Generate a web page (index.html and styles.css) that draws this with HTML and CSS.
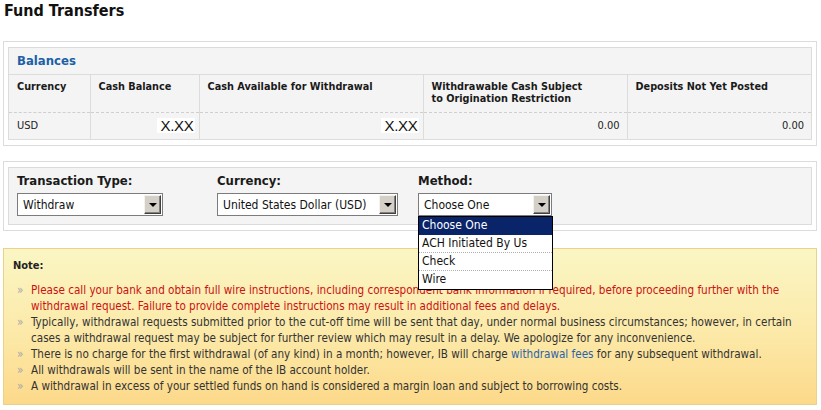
FILE: index.html
```html
<!DOCTYPE html>
<html>
<head>
<meta charset="utf-8">
<link rel="stylesheet" href="styles.css">
</head>
<body>
<div class="page">
  <h1 class="title">Fund Transfers</h1>

  <section class="panel">
    <div class="panel-inner">
      <table class="balances">
        <colgroup>
          <col class="c1"><col class="c2"><col class="c3"><col class="c4"><col class="c5">
        </colgroup>
        <thead>
          <tr class="caption-row"><th colspan="5" class="caption">Balances</th></tr>
          <tr class="head-row">
            <th>Currency</th>
            <th>Cash Balance</th>
            <th>Cash Available for Withdrawal</th>
            <th>Withdrawable Cash Subject<br>to Origination Restriction</th>
            <th>Deposits Not Yet Posted</th>
          </tr>
        </thead>
        <tbody>
          <tr class="data-row">
            <td>USD</td>
            <td class="num"><span class="mask">X.XX</span></td>
            <td class="num"><span class="mask">X.XX</span></td>
            <td class="num">0.00</td>
            <td class="num">0.00</td>
          </tr>
        </tbody>
      </table>
    </div>
  </section>

  <section class="panel form-panel">
    <div class="panel-inner form-grid">
      <div class="field">
        <div class="label">Transaction Type:</div>
        <div class="select w-type"><span class="select-text">Withdraw</span><span class="arrow"></span></div>
      </div>
      <div class="field">
        <div class="label">Currency:</div>
        <div class="select w-cur"><span class="select-text">United States Dollar (USD)</span><span class="arrow"></span></div>
      </div>
      <div class="field">
        <div class="label">Method:</div>
        <div class="select w-method"><span class="select-text">Choose One</span><span class="arrow"></span></div>
        <ul class="dropdown">
          <li class="selected">Choose One</li>
          <li>ACH Initiated By Us</li>
          <li>Check</li>
          <li>Wire</li>
        </ul>
      </div>
    </div>
  </section>

  <section class="note">
    <div class="note-title">Note:</div>
    <ul class="note-list">
      <li class="warn">Please call your bank and obtain full wire instructions, including correspondent bank information if required, before proceeding further with the withdrawal request. Failure to provide complete instructions may result in additional fees and delays.</li>
      <li>Typically, withdrawal requests submitted prior to the cut-off time will be sent that day, under normal business circumstances; however, in certain cases a withdrawal request may be subject for further review which may result in a delay. We apologize for any inconvenience.</li>
      <li>There is no charge for the first withdrawal (of any kind) in a month; however, IB will charge <a class="link" href="#">withdrawal fees</a> for any subsequent withdrawal.</li>
      <li>All withdrawals will be sent in the name of the IB account holder.</li>
      <li>A withdrawal in excess of your settled funds on hand is considered a margin loan and subject to borrowing costs.</li>
    </ul>
  </section>
</div>
</body>
</html>
```

FILE: styles.css
```css
* { box-sizing: border-box; }
html, body { margin: 0; padding: 0; background: #fff; }
body {
  font-family: "DejaVu Sans Condensed", "DejaVu Sans", sans-serif;
  font-size: 11px;
  color: #333;
}
.page { padding: 0 4px 0 3px; }

.title {
  margin: 0;
  padding-left: 1px;
  font-size: 16px;
  line-height: 22px;
  font-weight: bold;
  color: #111;
}

.panel {
  border: 1px solid #dcdcdc;
  padding: 5px 4px;
  margin-top: 19px;
  background: #fff;
}
.panel-inner {
  border: 1px solid #dcdcdc;
  background: #f4f4f4;
}

.balances {
  width: 100%;
  border-collapse: collapse;
  table-layout: fixed;
}
.c1 { width: 81px; }
.c2 { width: 109px; }
.c3 { width: 224px; }
.c4 { width: 204px; }
.c5 { width: auto; }

.caption {
  height: 26px;
  text-align: left;
  padding: 0 0 0 8px;
  font-size: 13px;
  font-weight: bold;
  color: #1d5fa6;
  border-bottom: 1px solid #dcdcdc;
}
.head-row th {
  height: 38px;
  vertical-align: top;
  text-align: left;
  padding: 6px 8px 0;
  font-size: 10.8px;
  line-height: 12px;
  font-weight: bold;
  color: #1a1a1a;
  border-left: 1px solid #dcdcdc;
  border-bottom: 1px dashed #cfcfcf;
}
.head-row th:first-child, .data-row td:first-child { border-left: none; }
.data-row td {
  height: 27px;
  padding: 0 8px;
  border-left: 1px solid #dcdcdc;
  color: #222;
}
.data-row td.num { text-align: right; padding-right: 7px; }
.data-row td.num:nth-child(2), .data-row td.num:nth-child(3) { padding-right: 4px; }
.mask {
  display: inline-block;
  background: #fff;
  font-family: "Liberation Sans", Arial, sans-serif;
  font-size: 15px;
  line-height: 15px;
  padding: 0 1px 0 4px;
  color: #111;
  letter-spacing: -0.3px;
}

.form-panel { margin-top: 15px; }
.form-grid {
  display: grid;
  grid-template-columns: 200px 201px 1fr;
  padding: 6px 8px 8px;
}
.field { position: relative; }
.label {
  height: 17px;
  margin-bottom: 2px;
  font-size: 13px;
  line-height: 14px;
  font-weight: bold;
  color: #1a1a1a;
}
.select {
  display: flex;
  align-items: center;
  height: 23px;
  border: 1px solid #7c7c7c;
  background: #fff;
  padding: 1px 1px 1px 5px;
}
.select-text {
  flex: 1;
  font-size: 12px;
  color: #111;
  white-space: nowrap;
  overflow: hidden;
}
.arrow {
  position: relative;
  width: 17px;
  height: 19px;
  background: #d4d0c8;
  border-top: 1px solid #f4f2ee;
  border-left: 1px solid #f4f2ee;
  border-right: 1px solid #404040;
  border-bottom: 1px solid #404040;
  box-shadow: inset -1px -1px 0 #808080;
}
.arrow::after {
  content: "";
  position: absolute;
  left: 4px;
  top: 7px;
  border-left: 4px solid transparent;
  border-right: 4px solid transparent;
  border-top: 4px solid #000;
}
.w-type { width: 146px; }
.w-cur { width: 181px; }
.w-method { width: 134px; }

.dropdown {
  position: absolute;
  left: 0;
  top: 42px;
  width: 135px;
  margin: 0;
  padding: 0;
  list-style: none;
  background: #fff;
  border: 1px solid #000;
  z-index: 5;
}
.dropdown li {
  height: 18px;
  line-height: 17px;
  padding-left: 3px;
  font-size: 12px;
  color: #111;
  border-bottom: 1px dotted #b0b0b0;
}
.dropdown li:last-child { border-bottom: none; }
.dropdown li.selected {
  background: #0a246a;
  color: #fff;
  border-bottom-color: #0a246a;
}

.note {
  margin-top: 17px;
  border: 1px solid #ead28a;
  background: linear-gradient(to bottom, #faf6c4 0%, #fce9a8 55%, #fcd98a 100%);
  padding: 9px 9px 10px;
}
.note-title {
  font-size: 11px;
  line-height: 16px;
  font-weight: bold;
  color: #222;
}
.note-list {
  list-style: none;
  margin: 8px 0 0;
  padding: 0;
}
.note-list li {
  position: relative;
  padding-left: 18px;
  line-height: 16px;
  font-size: 11.6px;
  color: #333;
}
.note-list li::before {
  content: "»";
  position: absolute;
  left: 4px;
  top: 0;
  color: #a8a8a8;
}
.note-list li.warn { color: #cc1111; }
.link { color: #2a63a8; text-decoration: none; }
```
